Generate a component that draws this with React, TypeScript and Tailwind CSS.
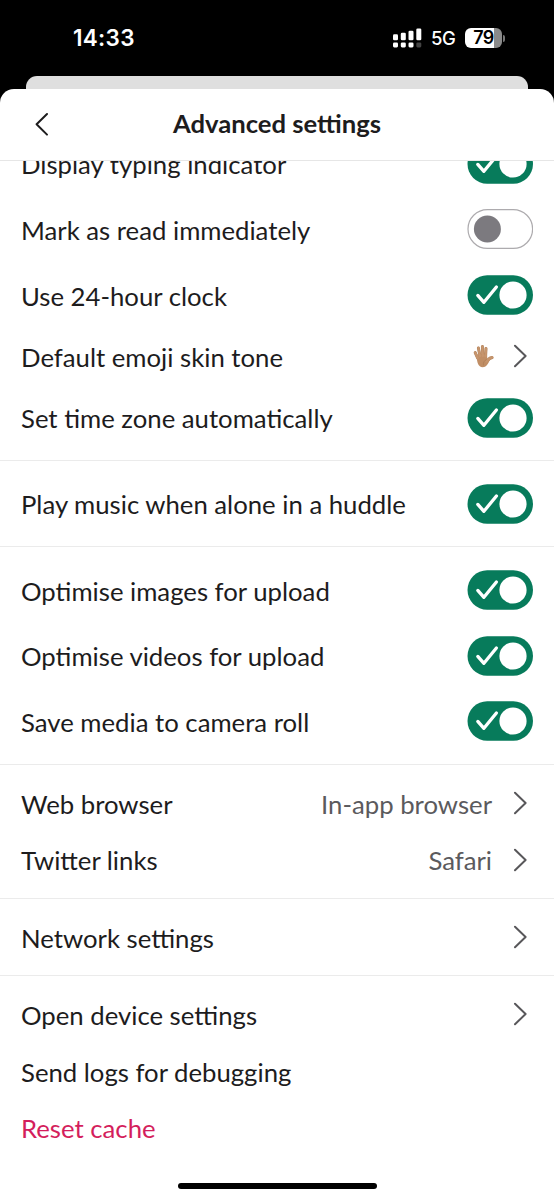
import type { ReactNode } from "react";

function Toggle({ on = true }: { on?: boolean }) {
  if (!on) {
    return (
      <svg className="block h-10 w-[66px]" viewBox="0 0 66 40" role="switch" aria-checked="false">
        <rect x="1" y="0.6" width="64.6" height="38.8" rx="19.4" fill="#fff" stroke="#adabae" strokeWidth="1.2" />
        <circle cx="20.4" cy="20" r="13.5" fill="#7c7a7f" />
      </svg>
    );
  }
  return (
    <svg className="block h-10 w-[66px]" viewBox="0 0 66 40" role="switch" aria-checked="true">
      <rect x="0.5" y="0.3" width="65.5" height="39.4" rx="19.7" fill="#077b5b" />
      <path d="M10.8 20.4 L16.9 27.3 L29.4 12" fill="none" stroke="#fff" strokeWidth="3.3" strokeLinecap="round" strokeLinejoin="round" />
      <circle cx="46" cy="20" r="13.6" fill="#fff" />
    </svg>
  );
}

function Chevron() {
  return (
    <svg className="block h-[24px] w-[14px]" viewBox="0 0 14 24" fill="none">
      <path d="M2 1.8 L12.6 12 L2 22.2" stroke="#58575a" strokeWidth="2" strokeLinecap="round" strokeLinejoin="round" />
    </svg>
  );
}

function Hand() {
  return (
    <svg className="block h-[24px] w-[21px] translate-x-[2px]" viewBox="0 0 21 24">
      <g stroke="#b07f57" strokeLinecap="round" fill="none">
        <path d="M2.2 8.6 L4.6 14 M5.4 4 L7 12 M9.4 2.6 L9.8 12 M13 4.4 L12.6 12" strokeWidth="3" />
        <path d="M19 13.6 C16.6 13.6 15.5 15.4 13.6 17.4" strokeWidth="3.2" />
      </g>
      <path d="M3.4 11 C6 10 11 10 14 11 L14.4 14.8 L17.2 14.2 C16 18.4 14 23.2 9.6 23.2 C5.2 23.2 4 18.6 3.4 11Z" fill="#c08e65" />
      <g stroke="#c6956d" strokeLinecap="round" fill="none">
        <path d="M2.2 8.6 L4.6 14 M5.4 4 L7 12 M9.4 2.6 L9.8 12 M13 4.4 L12.6 12" strokeWidth="2.3" />
        <path d="M19 13.6 C16.6 13.6 15.5 15.4 13.6 17.4" strokeWidth="2.5" />
      </g>
      <path d="M13.4 15.6 C11 16.6 10 18.6 10.4 21" fill="none" stroke="#ac7b54" strokeWidth="0.7" strokeLinecap="round" />
    </svg>
  );
}

function ToggleRow({ label, on = true }: { label: string; on?: boolean }) {
  return (
    <div className="flex h-[65.7px] items-center justify-between">
      <span className="pt-px">{label}</span>
      <Toggle on={on} />
    </div>
  );
}

function LinkRow({ label, value }: { label: string; value?: ReactNode }) {
  return (
    <div className="flex h-[56.7px] items-center justify-between pr-[6px]">
      <span className="pt-px">{label}</span>
      <div className="flex items-center gap-[21px] text-[#5b5a5d]">
        {value}
        <Chevron />
      </div>
    </div>
  );
}

function Section({ children }: { children: ReactNode }) {
  return <section className="border-t border-[#ebebeb] py-[9.8px] pr-[21px] pl-[21px] first:border-t-0 first:pt-0">{children}</section>;
}

function StatusBar() {
  return (
    <div className="flex h-[76px] items-center justify-between pr-[49px] pl-[73px] font-['Inter',sans-serif] text-white">
      <span className="text-[22.5px] font-semibold tracking-[0.3px]">14:33</span>
      <div className="flex items-center">
        <svg className="h-5 w-[29px]" viewBox="0 0 29 20" fill="#fff">
          <rect x="0" y="6.2" width="5" height="6" rx="1.3" />
          <rect x="7.8" y="4.8" width="5" height="7.4" rx="1.3" />
          <rect x="15.5" y="2.8" width="5" height="9.4" rx="1.3" />
          <rect x="23.3" y="0.4" width="5" height="11.8" rx="1.3" />
          <rect x="0" y="14.4" width="5" height="5" rx="1.3" />
          <rect x="7.8" y="14.4" width="5" height="5" rx="1.3" />
          <rect x="15.5" y="14.4" width="5" height="5" rx="1.3" />
          <rect x="23.3" y="14.4" width="5" height="5" rx="1.3" fill="#444" />
        </svg>
        <span className="ml-[9px] w-[26px] pt-px text-[18.5px] leading-none font-medium tracking-[-0.4px]">5G</span>
        <div className="ml-[8px] flex h-5 w-[37px] items-center justify-center rounded-[6px] bg-linear-to-r from-white from-78% to-[#8a8a8a] to-78% text-[18px] font-semibold tracking-[-0.6px] text-black">
          79
        </div>
        <div className="ml-[1px] h-[7px] w-[2px] rounded-r-full bg-[#777]" />
      </div>
    </div>
  );
}

export default function App() {
  return (
    <div className="flex h-[1200px] w-[554px] flex-col overflow-hidden bg-black font-['Lato',sans-serif] text-[25.73px] leading-[32px] text-[#1d1c1d]">
      <StatusBar />
      <div className="mx-[26px] h-[13px] shrink-0 rounded-t-[11px] bg-[#dfdfdf]" />
      <div className="flex min-h-0 flex-1 flex-col rounded-t-[14px] bg-white">
        <header className="grid h-[72px] shrink-0 grid-cols-[1fr_auto_1fr] items-center border-b border-[#e6e6e6] px-[35px] pb-[2px]">
          <svg className="block h-[24px] w-[14px]" viewBox="0 0 14 24" fill="none">
            <path d="M12 2 L1.6 12.3 L12 22.6" stroke="#1d1c1d" strokeWidth="2" strokeLinecap="round" strokeLinejoin="round" />
          </svg>
          <h1 className="pb-[2px] text-[25.65px] font-bold">Advanced settings</h1>
        </header>
        <main className="min-h-0 flex-1 overflow-hidden">
          <div className="-mt-[30.1px]">
            <Section>
              <ToggleRow label="Display typing indicator" />
              <ToggleRow label="Mark as read immediately" on={false} />
              <ToggleRow label="Use 24-hour clock" />
              <LinkRow label="Default emoji skin tone" value={<Hand />} />
              <ToggleRow label="Set time zone automatically" />
            </Section>
            <Section>
              <ToggleRow label="Play music when alone in a huddle" />
            </Section>
            <Section>
              <ToggleRow label="Optimise images for upload" />
              <ToggleRow label="Optimise videos for upload" />
              <ToggleRow label="Save media to camera roll" />
            </Section>
            <Section>
              <LinkRow label="Web browser" value={<span className="pt-px">In-app browser</span>} />
              <LinkRow label="Twitter links" value={<span className="pt-px">Safari</span>} />
            </Section>
            <Section>
              <LinkRow label="Network settings" />
            </Section>
            <Section>
              <LinkRow label="Open device settings" />
              <div className="flex h-[56.7px] items-center pt-px">Send logs for debugging</div>
              <div className="flex h-[56.7px] items-center pt-px text-[#d41e5c]">Reset cache</div>
            </Section>
          </div>
        </main>
        <footer className="flex h-[17px] shrink-0 justify-center">
          <div className="h-[6px] w-[199px] rounded-full bg-black" />
        </footer>
      </div>
    </div>
  );
}
